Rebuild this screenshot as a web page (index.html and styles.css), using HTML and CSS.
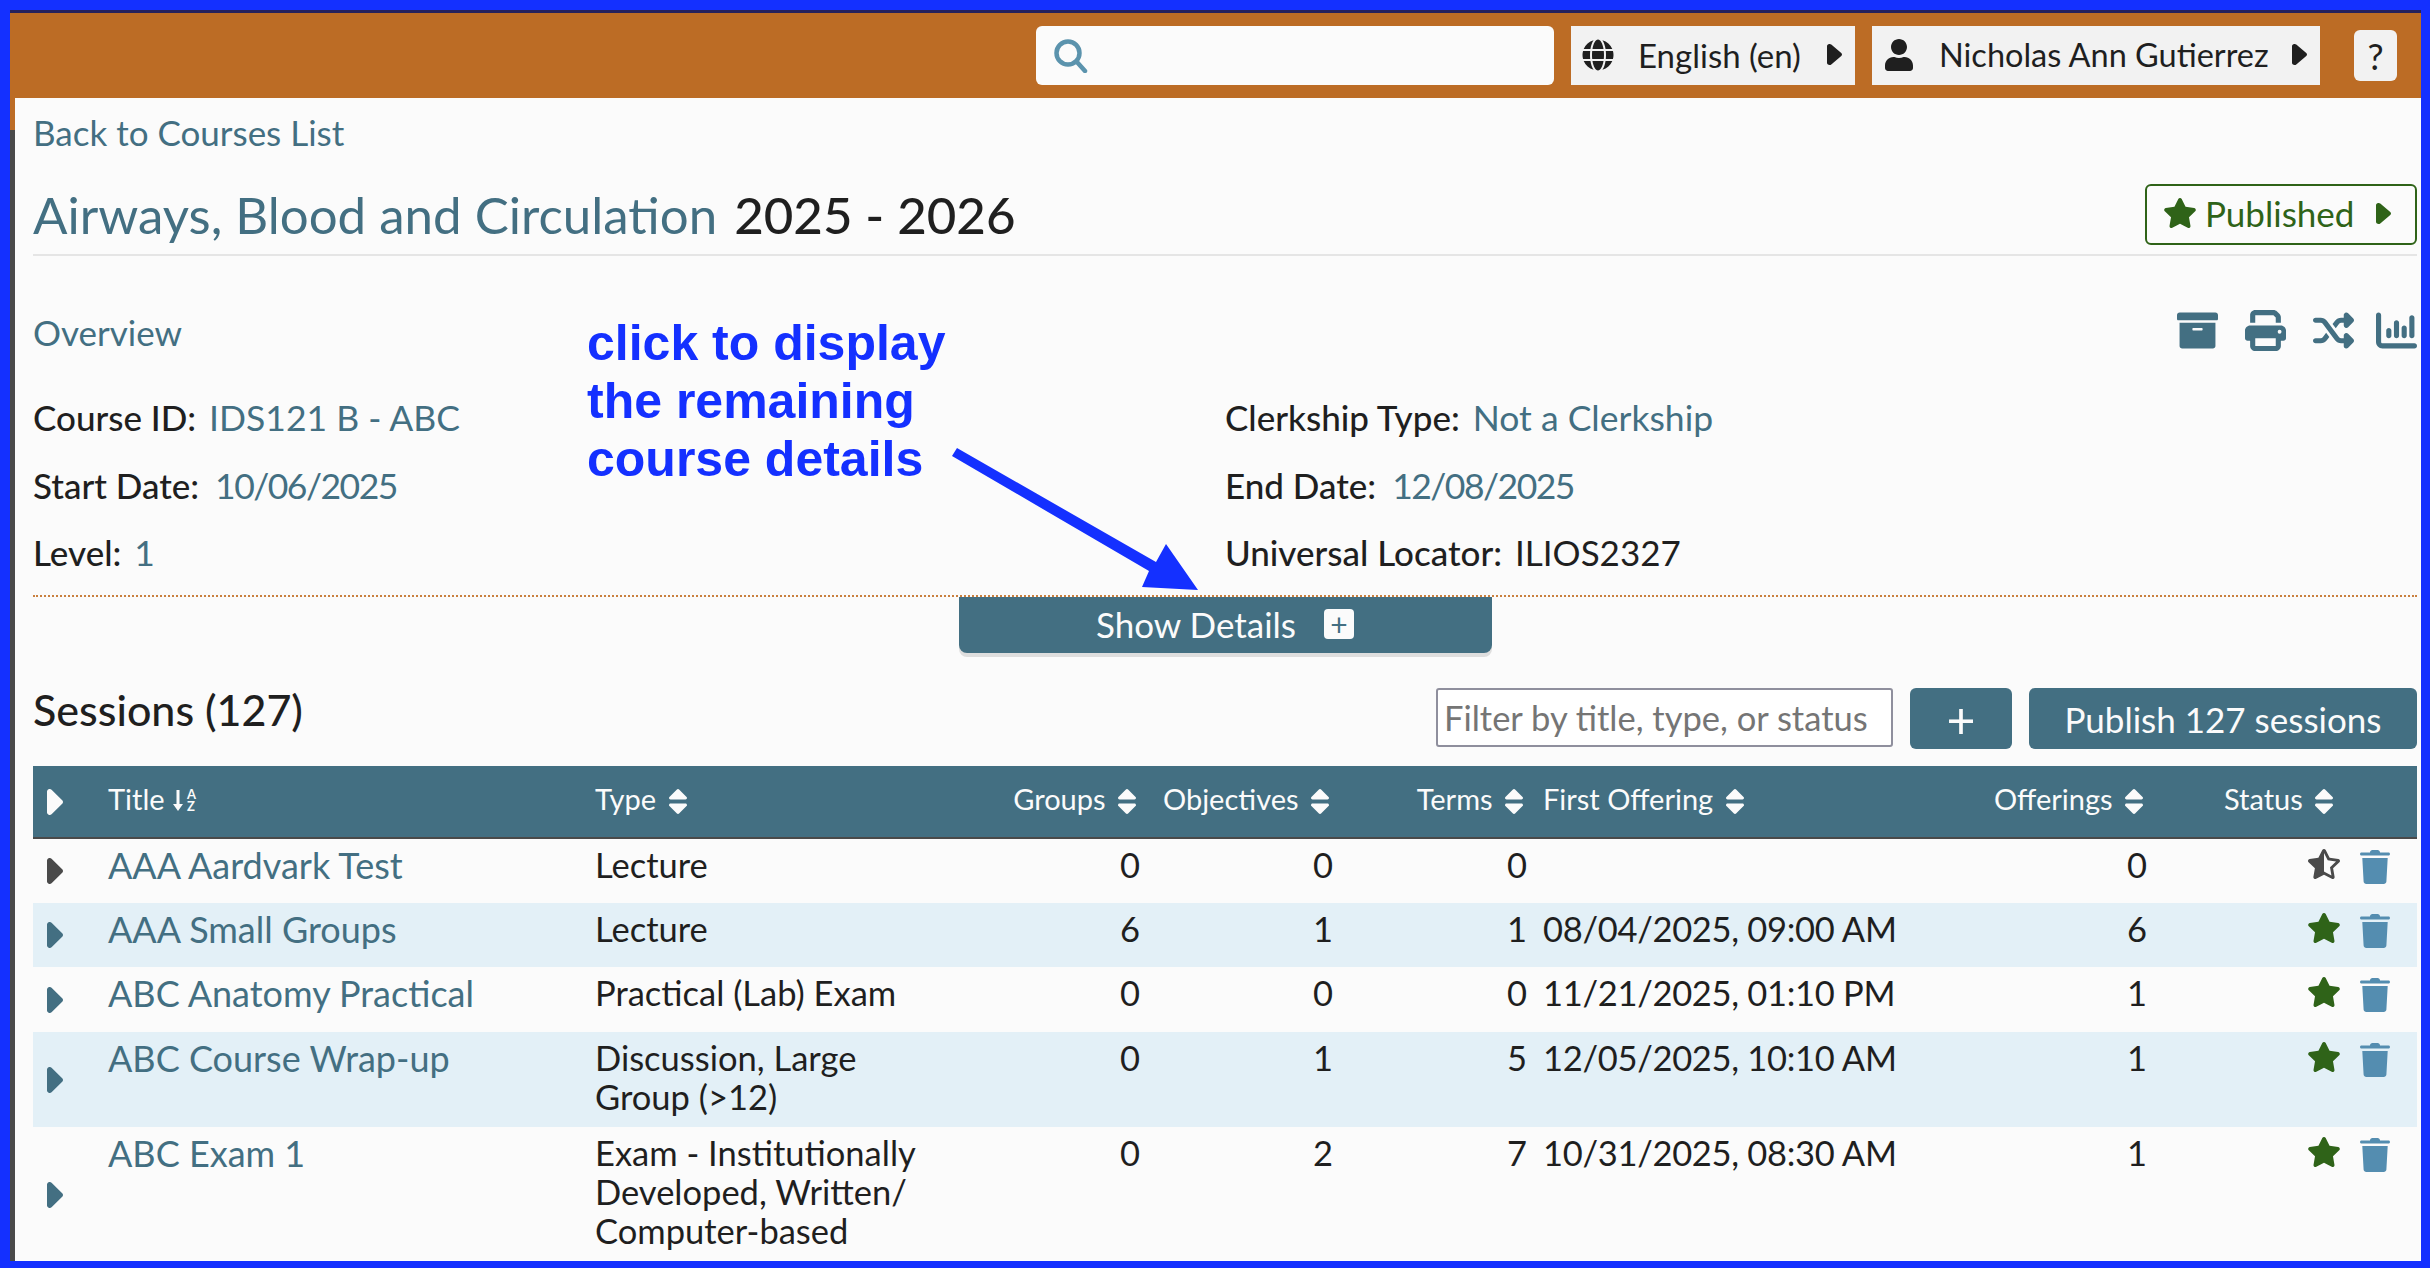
FILE: index.html
```html
<!DOCTYPE html>
<html>

<head>
	<title>Airways, Blood and Circulation</title>
	<link rel="stylesheet" href="styles.css">
</head>

<body>
	<svg class="defs" width="0" height="0">
		<symbol id="caret" viewBox="64 96 192 320" preserveAspectRatio="none"><path d="M246.600 278.600c12.500-12.500 12.500-32.800 0-45.300l-128-128c-9.200-9.200-22.900-11.900-34.900-6.900s-19.800 16.600-19.800 29.600l0 256c0 12.900 7.800 24.600 19.800 29.600s25.700 2.200 34.900-6.900l128-128z"/></symbol>
		<symbol id="sort" viewBox="17 57 286 398" preserveAspectRatio="none"><path d="M41 288h238c21.400 0 32.100 25.900 17 41L177 448c-9.400 9.400-24.600 9.400-33.900 0L24 329c-15.100-15.100-4.400-41 17-41zm255-105L177 64c-9.400-9.400-24.600-9.400-33.900 0L24 183c-15.100 15.100-4.400 41 17 41h238c21.400 0 32.100-25.900 17-41z"/></symbol>
		<symbol id="star" viewBox="17 0 542 512" preserveAspectRatio="none"><path d="M259.300 17.800L194 150.200 47.900 171.500c-26.200 3.800-36.700 36.100-17.700 54.600l105.700 103-25 145.500c-4.500 26.300 23.200 46 46.400 33.700L288 439.600l130.700 68.700c23.200 12.200 50.900-7.400 46.400-33.700l-25-145.500 105.700-103c19-18.500 8.500-50.800-17.700-54.600L382 150.200 316.700 17.800c-11.700-23.600-45.600-23.900-57.400 0z"/></symbol>
		<symbol id="starhalf" viewBox="0 0 536 512" preserveAspectRatio="none"><path d="M508.550 171.510L362.180 150.200 296.770 17.810C290.890 5.980 279.420 0 267.950 0c-11.400 0-22.790 5.900-28.690 17.810l-65.430 132.380-146.380 21.290c-26.250 3.800-36.770 36.090-17.740 54.590l105.890 103-25.060 145.480C86.980 495.330 103.570 512 122.150 512c4.930 0 10-1.170 14.870-3.750l130.950-68.680 130.940 68.700c4.860 2.550 9.920 3.710 14.830 3.710 18.600 0 35.220-16.610 31.660-37.400l-25.030-145.490 105.910-102.980c19.040-18.500 8.520-50.800-17.730-54.600zm-121.740 123.200l-18.120 17.620 4.280 24.880 19.520 113.450-102.130-53.590-22.380-11.740.03-317.190 51.030 103.290 11.180 22.630 25.010 3.640 114.230 16.630-82.650 80.380z"/></symbol>
		<symbol id="trash" viewBox="0 0 30 34"><path d="M10 2.500C10 1 11 0 12.500 0h5C19 0 20 1 20 2.500h8.500C29.400 2.500 30 3.200 30 4s-.6 1.500-1.500 1.500h-27C.6 5.500 0 4.800 0 4s.6-1.500 1.500-1.500zM2.300 8h25.400l-1.300 23.500c-.1 1.500-1.300 2.500-2.700 2.500H6.300c-1.400 0-2.600-1-2.700-2.500z"/></symbol>
	</svg>

	<div class="frame">
		<header class="topbar">
			<div class="search">
				<svg class="search-icon" viewBox="0 0 34 34"><circle cx="14" cy="14" r="11.500"/><path d="M22.500 22.500L31 32"/></svg>
			</div>
			<div class="menu menu-lang">
				<svg class="menu-icon" viewBox="0 0 496 512"><path d="M336.500 160C322 70.700 287.800 8 248 8s-74 62.700-88.500 152h177zM152 256c0 22.200 1.200 43.500 3.300 64h185.300c2.100-20.500 3.300-41.800 3.300-64s-1.200-43.500-3.300-64H155.300c-2.100 20.500-3.300 41.800-3.300 64zm324.700-96c-28.600-67.900-86.500-120.400-158-141.600 24.400 33.800 41.200 84.700 50 141.600h108zM177.200 18.400C105.800 39.600 47.800 92.100 19.300 160h108c8.700-56.900 25.500-107.800 49.900-141.600zM487.400 192H372.700c2.100 21 3.300 42.500 3.300 64s-1.200 43-3.300 64h114.600c5.500-20.500 8.600-41.800 8.600-64s-3.100-43.500-8.500-64zM120 256c0-21.500 1.200-43 3.300-64H8.600C3.200 212.500 0 233.800 0 256s3.200 43.500 8.600 64h114.600c-2-21-3.200-42.500-3.200-64zm39.500 96c14.500 89.300 48.700 152 88.500 152s74-62.700 88.500-152h-177zm159.300 141.600c71.400-21.200 129.400-73.700 158-141.600h-108c-8.800 56.900-25.600 107.800-50 141.600zM19.300 352c28.600 67.900 86.500 120.400 158 141.600-24.400-33.800-41.200-84.700-50-141.600h-108z"/></svg>
				<span>English (en)</span>
				<svg class="caret"><use href="#caret"/></svg>
			</div>
			<div class="menu menu-user">
				<svg class="menu-icon" viewBox="0 0 448 512"><path d="M224 256c70.700 0 128-57.300 128-128S294.700 0 224 0 96 57.300 96 128s57.300 128 128 128zm89.600 32h-16.700c-22.200 10.200-46.900 16-72.900 16s-50.600-5.800-72.900-16h-16.700C60.200 288 0 348.200 0 422.400V464c0 26.500 21.500 48 48 48h352c26.500 0 48-21.500 48-48v-41.600c0-74.200-60.200-134.400-134.400-134.400z"/></svg>
				<span>Nicholas Ann Gutierrez</span>
				<svg class="caret"><use href="#caret"/></svg>
			</div>
			<div class="help">?</div>
		</header>

		<main class="content">
			<a class="back">Back to Courses List</a>

			<div class="title-row">
				<h1 class="title"><a>Airways, Blood and Circulation</a> <span class="year">2025 - 2026</span></h1>
				<div class="publish-btn">
					<svg class="publish-star"><use href="#star"/></svg>
					<span>Published</span>
					<svg class="caret"><use href="#caret"/></svg>
				</div>
			</div>

			<div class="overview-head">
				<a class="overview-link">Overview</a>
				<div class="tools">
					<svg viewBox="0 0 512 512"><path d="M32 448c0 17.700 14.300 32 32 32h384c17.700 0 32-14.300 32-32V160H32v288zm160-212c0-6.600 5.400-12 12-12h104c6.600 0 12 5.400 12 12v8c0 6.600-5.400 12-12 12H204c-6.600 0-12-5.400-12-12v-8zM480 32H32C14.300 32 0 46.300 0 64v48c0 8.800 7.200 16 16 16h480c8.800 0 16-7.200 16-16V64c0-17.700-14.300-32-32-32z"/></svg>
					<svg viewBox="0 0 512 512"><path d="M128 0C92.700 0 64 28.700 64 64v96h64V64H354.700L384 93.300V160h64V93.300c0-17-6.700-33.300-18.700-45.300L400 18.700C388 6.700 371.700 0 354.700 0H128zM384 352v32 64H128V384 368 352H384zm64 32h32c17.700 0 32-14.300 32-32V256c0-35.300-28.700-64-64-64H64c-35.300 0-64 28.700-64 64v96c0 17.700 14.300 32 32 32H64v64c0 35.300 28.700 64 64 64H384c35.300 0 64-28.700 64-64V384zM432 248a24 24 0 1 1 0 48 24 24 0 1 1 0-48z"/></svg>
					<svg viewBox="0 0 512 512"><path d="M403.800 34.400c12-5 25.700-2.200 34.900 6.900l64 64c6 6 9.400 14.100 9.400 22.600s-3.400 16.600-9.400 22.600l-64 64c-9.200 9.200-22.900 11.900-34.900 6.900s-19.800-16.600-19.800-29.600V160H352c-10.100 0-19.600 4.700-25.600 12.800L284 229.300 244 176l31.200-41.600C293.300 110.200 321.800 96 352 96h32V64c0-12.900 7.800-24.600 19.800-29.600zM164 282.700L204 336l-31.200 41.600C154.700 401.800 126.200 416 96 416H32c-17.700 0-32-14.300-32-32s14.300-32 32-32H96c10.100 0 19.600-4.700 25.600-12.800L164 282.700zm274.600 188c-9.200 9.200-22.900 11.900-34.900 6.900s-19.800-16.600-19.800-29.600V416H352c-30.200 0-58.700-14.200-76.800-38.400L121.600 172.800c-6-8.100-15.500-12.800-25.600-12.800H32c-17.700 0-32-14.300-32-32s14.300-32 32-32H96c30.200 0 58.700 14.200 76.800 38.400L326.400 339.200c6 8.100 15.500 12.800 25.600 12.800h32V320c0-12.900 7.800-24.600 19.800-29.600s25.700-2.200 34.900 6.900l64 64c6 6 9.400 14.100 9.400 22.600s-3.400 16.600-9.400 22.600l-64 64z"/></svg>
					<svg viewBox="0 0 512 512"><path d="M32 32c17.700 0 32 14.300 32 32V400c0 8.800 7.200 16 16 16H480c17.700 0 32 14.300 32 32s-14.300 32-32 32H80c-44.200 0-80-35.800-80-80V64C0 46.300 14.300 32 32 32zM160 224c17.700 0 32 14.300 32 32v64c0 17.700-14.300 32-32 32s-32-14.300-32-32V256c0-17.700 14.300-32 32-32zm128-64V320c0 17.700-14.300 32-32 32s-32-14.300-32-32V160c0-17.700 14.300-32 32-32s32 14.300 32 32zm64 32c17.700 0 32 14.300 32 32v96c0 17.700-14.300 32-32 32s-32-14.300-32-32V224c0-17.700 14.300-32 32-32zM480 96V320c0 17.700-14.300 32-32 32s-32-14.300-32-32V96c0-17.700 14.300-32 32-32s32 14.300 32 32z"/></svg>
				</div>
			</div>

			<div class="details">
				<div class="detail"><b>Course ID:</b> <a>IDS121 B - ABC</a></div>
				<div class="detail"><b>Clerkship Type:</b> <a>Not a Clerkship</a></div>
				<div class="detail"><b>Start Date:</b> <a class="detail-date">10/06/2025</a></div>
				<div class="detail"><b>End Date:</b> <a class="detail-date">12/08/2025</a></div>
				<div class="detail"><b>Level:</b> <a>1</a></div>
				<div class="detail"><b>Universal Locator:</b> <span>ILIOS2327</span></div>
			</div>

			<div class="show-details-wrap">
				<div class="show-details">
					<span>Show Details</span>
					<span class="plus-box">+</span>
				</div>
			</div>

			<div class="sessions-head">
				<h2 class="sessions-title">Sessions (127)</h2>
				<div class="sessions-actions">
					<input class="filter" type="text" placeholder="Filter by title, type, or status">
					<div class="btn btn-plus">+</div>
					<div class="btn btn-publish">Publish 127 sessions</div>
				</div>
			</div>

			<table class="sessions">
				<colgroup>
					<col class="c-expand"><col class="c-title"><col class="c-type"><col class="c-groups"><col class="c-objectives"><col class="c-terms"><col class="c-first"><col class="c-offerings"><col class="c-status">
				</colgroup>
				<thead>
					<tr>
						<th class="expand"><svg class="caret-big"><use href="#caret"/></svg></th>
						<th>Title <svg class="sort-az" viewBox="0 0 26 28"><path d="M4.500 4h3v14h3.500l-5 7-5-7h3.500z"/><text x="15" y="13" class="az">A</text><text x="15" y="25" class="az">Z</text></svg></th>
						<th>Type <svg class="sort"><use href="#sort"/></svg></th>
						<th class="num">Groups <svg class="sort"><use href="#sort"/></svg></th>
						<th class="num">Objectives <svg class="sort"><use href="#sort"/></svg></th>
						<th class="num">Terms <svg class="sort"><use href="#sort"/></svg></th>
						<th>First Offering <svg class="sort"><use href="#sort"/></svg></th>
						<th class="num">Offerings <svg class="sort"><use href="#sort"/></svg></th>
						<th class="status-head">Status <svg class="sort"><use href="#sort"/></svg></th>
					</tr>
				</thead>
				<tbody>
					<tr>
						<td class="expand"><svg class="caret-big dark"><use href="#caret"/></svg></td>
						<td><a>AAA Aardvark Test</a></td>
						<td>Lecture</td>
						<td class="num">0</td><td class="num">0</td><td class="num">0</td>
						<td></td>
						<td class="num">0</td>
						<td class="status"><svg class="star half"><use href="#starhalf"/></svg><svg class="trash"><use href="#trash"/></svg></td>
					</tr>
					<tr>
						<td class="expand"><svg class="caret-big"><use href="#caret"/></svg></td>
						<td><a>AAA Small Groups</a></td>
						<td>Lecture</td>
						<td class="num">6</td><td class="num">1</td><td class="num">1</td>
						<td class="date">08/04/2025, 09:00 AM</td>
						<td class="num">6</td>
						<td class="status"><svg class="star"><use href="#star"/></svg><svg class="trash"><use href="#trash"/></svg></td>
					</tr>
					<tr>
						<td class="expand"><svg class="caret-big"><use href="#caret"/></svg></td>
						<td><a>ABC Anatomy Practical</a></td>
						<td>Practical (Lab) Exam</td>
						<td class="num">0</td><td class="num">0</td><td class="num">0</td>
						<td class="date">11/21/2025, 01:10 PM</td>
						<td class="num">1</td>
						<td class="status"><svg class="star"><use href="#star"/></svg><svg class="trash"><use href="#trash"/></svg></td>
					</tr>
					<tr>
						<td class="expand"><svg class="caret-big"><use href="#caret"/></svg></td>
						<td><a>ABC Course Wrap-up</a></td>
						<td>Discussion, Large Group (&gt;12)</td>
						<td class="num">0</td><td class="num">1</td><td class="num">5</td>
						<td class="date">12/05/2025, 10:10 AM</td>
						<td class="num">1</td>
						<td class="status"><svg class="star"><use href="#star"/></svg><svg class="trash"><use href="#trash"/></svg></td>
					</tr>
					<tr>
						<td class="expand"><svg class="caret-big"><use href="#caret"/></svg></td>
						<td><a>ABC Exam 1</a></td>
						<td>Exam - Institutionally Developed, Written/ Computer-based</td>
						<td class="num">0</td><td class="num">2</td><td class="num">7</td>
						<td class="date">10/31/2025, 08:30 AM</td>
						<td class="num">1</td>
						<td class="status"><svg class="star"><use href="#star"/></svg><svg class="trash"><use href="#trash"/></svg></td>
					</tr>
				</tbody>
			</table>
		</main>

		<!-- callout drawn on top of the page -->
		<div class="callout">click to display<br>the remaining<br>course details</div>
		<svg class="callout-arrow" viewBox="0 0 250 150"><path d="M7 3L206 117L216 99L248 145L192 142L199 126L2 11z"/></svg>
	</div>
</body>

</html>
```

FILE: styles.css
```css
* {
	box-sizing: border-box;
}

html,
body {
	margin: 0;
	height: 100%;
	overflow: hidden;
}

body {
	font-family: Lato, "Noto Sans", sans-serif;
	font-size: 35px;
	color: #1f1f1f;
	background-color: #1430ff;
}

a {
	color: #436f82;
}

.defs {
	position: absolute;
}

.frame {
	position: relative;
	margin: 10px 9px 7px 10px;
	height: 1251px;
	overflow: hidden;
	padding-left: 5px;
	background: linear-gradient(#bc6c25 120px, #4a4a4a 120px);
}

/* top bar */
.topbar {
	display: flex;
	align-items: center;
	justify-content: flex-end;
	height: 88px;
	margin-left: -5px;
	padding-right: 24px;
	background-color: #bc6c25;
	border-top: 3px solid #26215c;
}

.search {
	display: flex;
	align-items: center;
	width: 518px;
	height: 59px;
	padding-left: 18px;
	border-radius: 6px;
	background-color: #fbfbfb;
}

.search-icon {
	width: 34px;
	height: 34px;
	fill: none;
	stroke: #5b93ad;
	stroke-width: 4.500;
	stroke-linecap: round;
}

.menu {
	display: flex;
	align-items: center;
	height: 59px;
	margin-left: 17px;
	padding: 0 0 2px 11px;
	font-size: 33px;
	background-color: #f2f2f2;
}

.menu-lang {
	width: 284px;
}

.menu-user {
	width: 448px;
	font-size: 32.500px;
}

.menu-icon {
	width: 32px;
	height: 32px;
	margin-right: 24px;
	fill: #1f1f1f;
}

.menu .caret {
	margin-left: auto;
	margin-right: 13px;
}

.caret {
	width: 15px;
	height: 21px;
	fill: #1f1f1f;
}

.help {
	display: flex;
	align-items: center;
	justify-content: center;
	width: 43px;
	height: 51px;
	margin-left: 34px;
	font-size: 36px;
	border-radius: 6px;
	background-color: #f2f2f2;
}

/* page content */
.content {
	height: 1163px;
	padding: 0 4px 0 18px;
	background-color: #fbfbfb;
}

.back {
	display: block;
	padding-top: 13px;
	height: 55px;
	line-height: 42px;
}

.title-row {
	display: flex;
	align-items: center;
	justify-content: space-between;
	height: 103px;
	padding-top: 21px;
	border-bottom: 2px solid #e5e5e5;
}

.title {
	margin: 0;
	font-size: 51px;
	font-weight: 400;
}

.year {
	margin-left: 4px;
	font-weight: 500;
}

.publish-btn {
	display: flex;
	align-items: center;
	width: 272px;
	height: 61px;
	padding: 0 24px 2px 17px;
	color: #2f6318;
	border: 2px solid #2f6318;
	border-radius: 6px;
}

.publish-star {
	width: 32px;
	height: 30px;
	margin-right: 9px;
	fill: #2f6318;
}

.publish-btn .caret {
	margin-left: auto;
	fill: #2f6318;
}

.overview-head {
	display: flex;
	justify-content: space-between;
	height: 98px;
	padding-top: 55px;
}

.overview-link {
	line-height: 42px;
}

.tools {
	display: flex;
	gap: 27px;
}

.tools svg {
	width: 41px;
	height: 41px;
	fill: #436f82;
	margin-top: -1px;
}

.tools svg:last-child {
	margin-left: -5px;
}

.details {
	display: grid;
	grid-template-columns: 1192px 1fr;
	grid-auto-rows: 67.500px;
	height: 243px;
	padding-top: 42px;
	border-bottom: 2px dotted #c9803f;
}

.detail b {
	font-weight: 500;
	margin-right: 4px;
}

.detail a {
	color: #436f82;
	font-size: 35.500px;
}

.detail .detail-date {
	margin-left: 3px;
	letter-spacing: -1.500px;
}

.show-details-wrap {
	display: flex;
	justify-content: center;
}

.show-details {
	display: flex;
	align-items: center;
	justify-content: center;
	gap: 28px;
	width: 533px;
	height: 56px;
	padding-bottom: 2px;
	color: #fbfbfb;
	background-color: #436f82;
	border-radius: 0 0 8px 8px;
	box-shadow: 0 4px 0 #dedede;
}

.plus-box {
	display: flex;
	align-items: center;
	justify-content: center;
	width: 30px;
	height: 30px;
	font-size: 30px;
	color: #436f82;
	background-color: #fbfbfb;
	border-radius: 4px;
}

.sessions-head {
	display: flex;
	justify-content: space-between;
	height: 113px;
	padding-top: 35px;
}

.sessions-title {
	margin: -3px 0 0;
	font-size: 43px;
	font-weight: 500;
	line-height: 50px;
}

.sessions-actions {
	display: flex;
	gap: 17px;
	height: 61px;
}

.filter {
	width: 457px;
	height: 59px;
	padding: 0 6px;
	font-family: inherit;
	font-size: 34.500px;
	color: #777;
	background-color: #fff;
	border: 2px solid #8f8f9d;
	border-radius: 3px;
}

.filter::placeholder {
	color: #757575;
}

.btn {
	display: flex;
	align-items: center;
	justify-content: center;
	height: 61px;
	color: #fbfbfb;
	background-color: #436f82;
	border-radius: 6px;
}

.btn-plus {
	width: 102px;
	font-size: 50px;
}

.btn-publish {
	width: 388px;
}

/* sessions table */
.sessions {
	width: 100%;
	table-layout: fixed;
	border-collapse: collapse;
}

.c-expand { width: 67px; }
.c-title { width: 487px; }
.c-type { width: 363px; }
.c-groups { width: 198px; }
.c-objectives { width: 193px; }
.c-terms { width: 194px; }
.c-first { width: 414px; }
.c-offerings { width: 206px; }

.sessions th {
	height: 72px;
	padding: 0 8px 6px;
	font-size: 29px;
	font-weight: 400;
	text-align: left;
	white-space: nowrap;
	color: #fbfbfb;
	background-color: #436f82;
	border-bottom: 2px solid #4a4a4a;
}

.sessions th.num {
	padding-right: 12px;
}

.sessions td {
	height: 64.700px;
	padding: 7px 8px 11px;
	font-size: 34.500px;
	line-height: 38.700px;
	vertical-align: top;
}

.sessions td a {
	font-size: 36px;
}

.sessions td.date {
	letter-spacing: -.3px;
}

.sessions tbody tr:nth-child(even) {
	background-color: #e3f0f7;
}

.sessions .num {
	text-align: right;
}

.sessions .expand {
	padding: 0 0 0 14px;
	vertical-align: middle;
}

.caret-big {
	display: block;
	width: 16px;
	height: 26px;
	fill: #436f82;
}

th .caret-big {
	fill: #fbfbfb;
}

.caret-big.dark {
	fill: #4a4a4a;
}

.sort {
	width: 18px;
	height: 25px;
	margin-left: 5px;
	vertical-align: -4px;
	fill: #fbfbfb;
}

.sort-az {
	width: 26px;
	height: 28px;
	vertical-align: -4px;
	fill: #fbfbfb;
}

.az {
	font-size: 13px;
	font-weight: 700;
}

.sessions .status-head {
	padding-left: 69px;
}

.sessions .status {
	padding: 10px 27px 0 0;
	text-align: right;
}

.star {
	width: 32px;
	height: 30px;
	margin-right: 20px;
	fill: #2f6318;
	vertical-align: top;
}

.star.half {
	fill: #4a4a4a;
}

.trash {
	width: 30px;
	height: 34px;
	margin-top: 1px;
	fill: #548db0;
	vertical-align: top;
}

/* callout */
.callout {
	position: absolute;
	left: 577px;
	top: 304px;
	font-family: "Liberation Sans", Arial, sans-serif;
	font-size: 50px;
	font-weight: 700;
	line-height: 58px;
	color: #1430ff;
}

.callout-arrow {
	position: absolute;
	left: 940px;
	top: 435px;
	width: 250px;
	height: 150px;
	fill: #1430ff;
}
```
